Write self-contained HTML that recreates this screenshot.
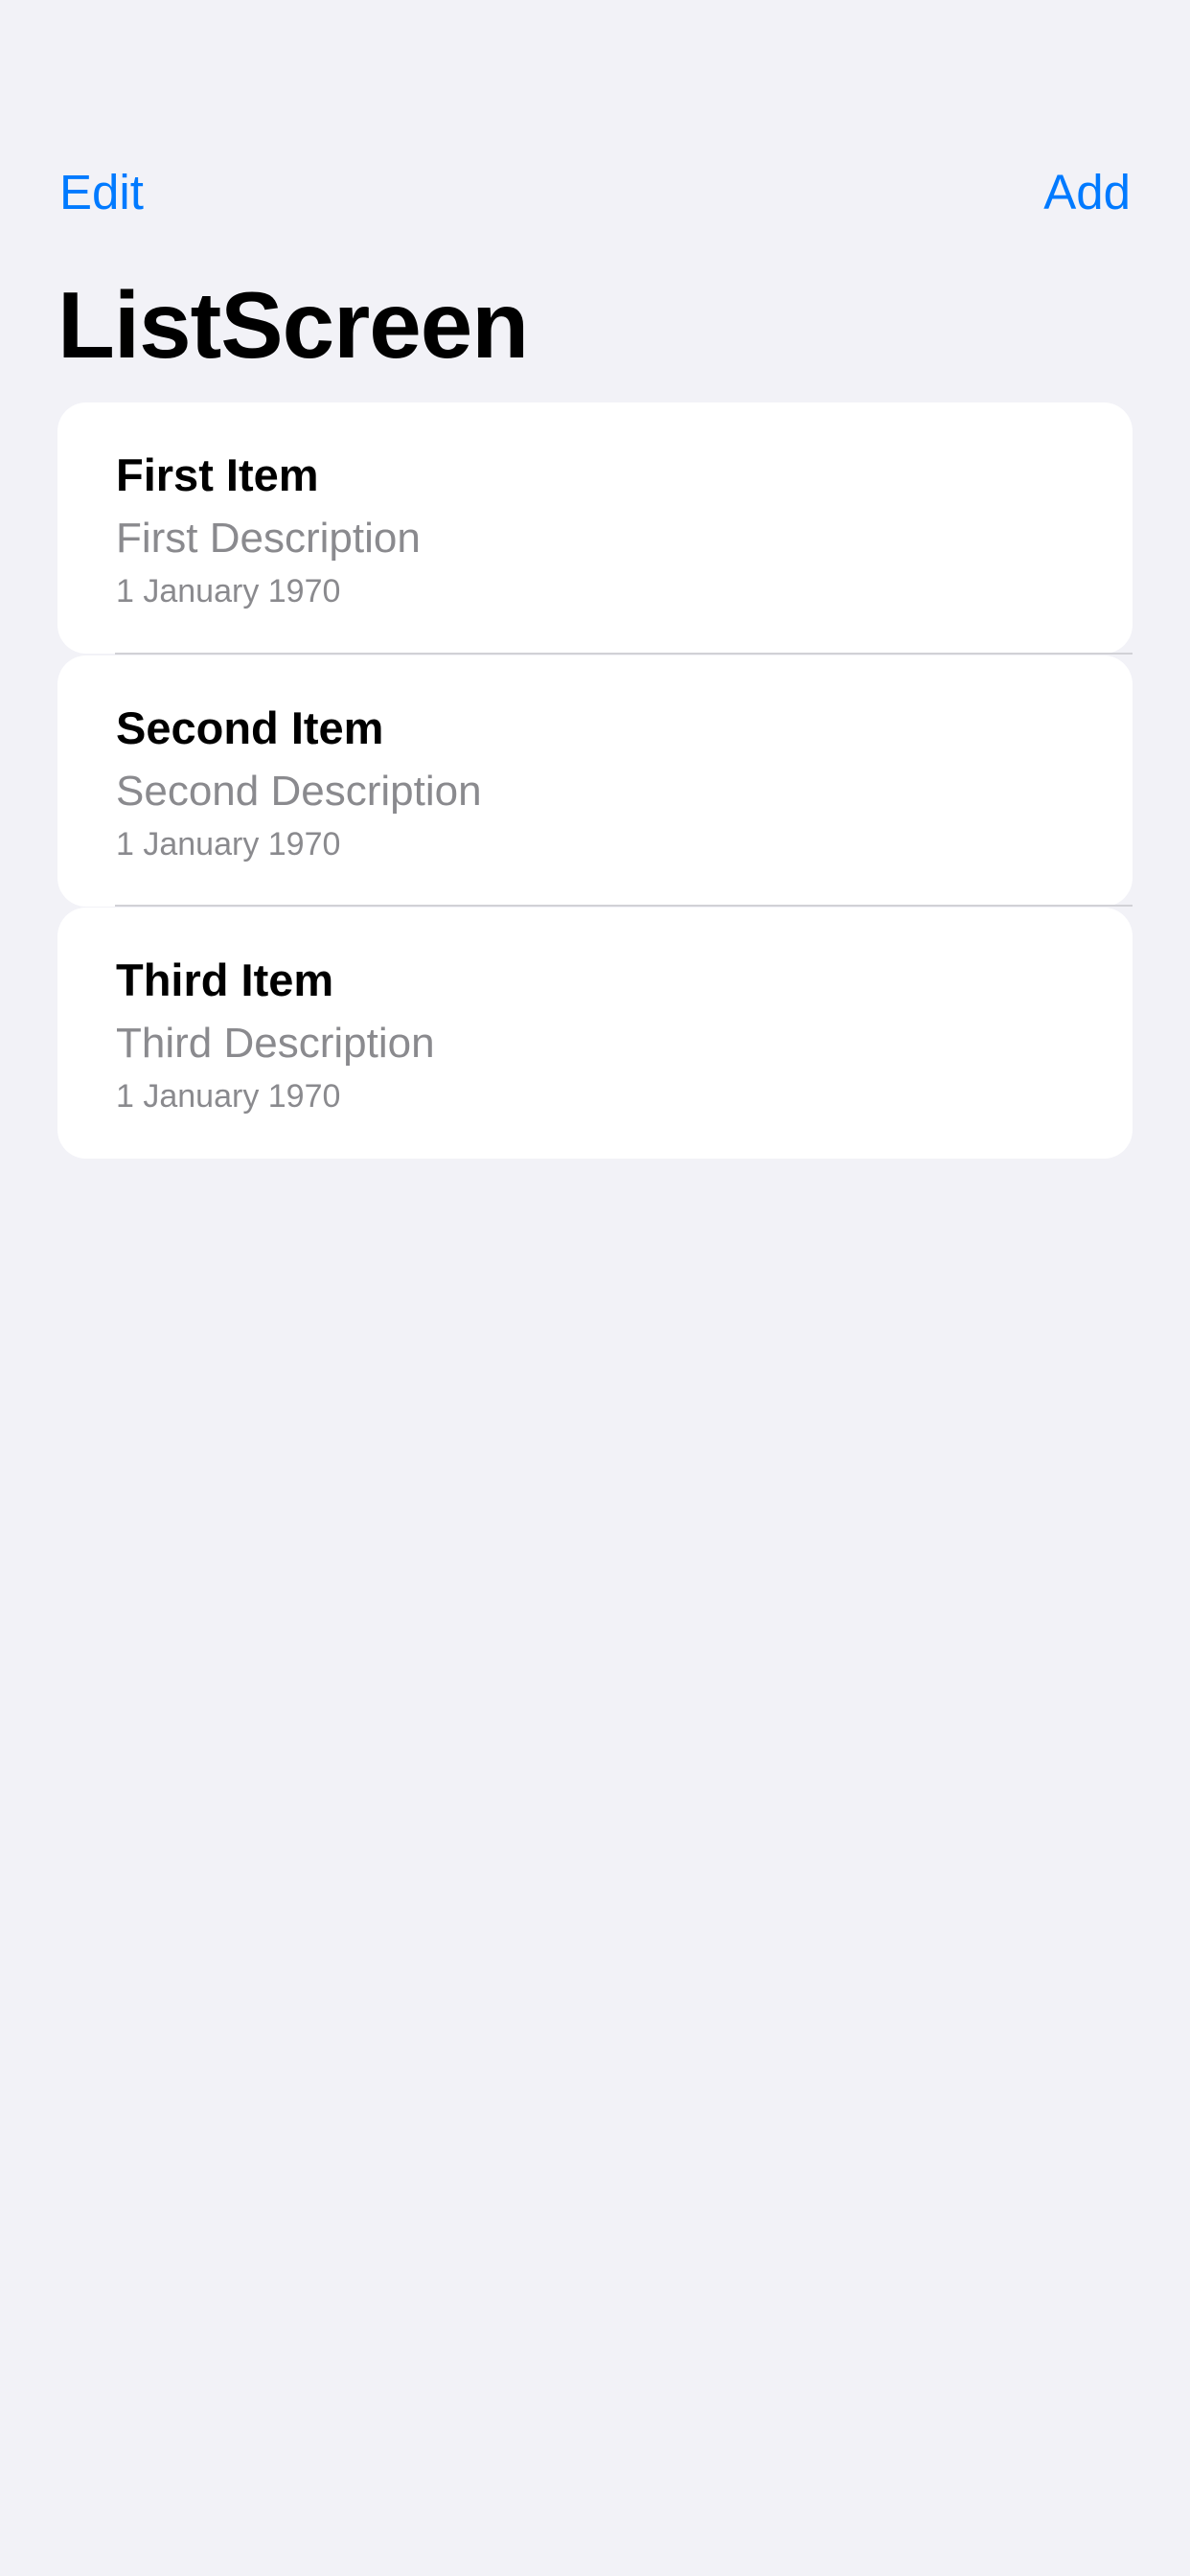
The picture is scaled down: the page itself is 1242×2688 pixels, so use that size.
<!DOCTYPE html>
<html><head><meta charset="utf-8"><style>
html,body{margin:0;padding:0}
body{width:1242px;height:2688px;background:#f2f2f7;position:relative;overflow:hidden;font-family:"Liberation Sans",sans-serif}
.a{position:absolute;white-space:nowrap}
.nav{font-size:51px;line-height:51px;color:#007aff;top:175px}
.title{font-size:98px;line-height:98px;font-weight:bold;left:60px;top:290px;color:#000;letter-spacing:-1px}
.card{position:absolute;left:60px;width:1122px;height:262px;background:#fff;border-radius:30px}
.t{left:61px;top:52px;font-size:47px;line-height:47px;font-weight:bold;color:#000}
.d{left:61px;top:120px;font-size:44px;line-height:44px;color:#8a8a8e}
.dt{left:61px;top:180px;font-size:34px;line-height:34px;color:#8a8a8e}
.sep{position:absolute;left:120px;width:1062px;height:2px;background:#d1d1d6}
</style></head><body>
<div class="a nav" style="left:62px">Edit</div>
<div class="a nav" style="right:62px">Add</div>
<div class="a title">ListScreen</div>

<div class="card" style="top:420px">
<div class="a t">First Item</div>
<div class="a d">First Description</div>
<div class="a dt">1 January 1970</div>
</div>
<div class="sep" style="top:681px"></div>

<div class="card" style="top:684px">
<div class="a t">Second Item</div>
<div class="a d">Second Description</div>
<div class="a dt">1 January 1970</div>
</div>
<div class="sep" style="top:944px"></div>

<div class="card" style="top:947px">
<div class="a t">Third Item</div>
<div class="a d">Third Description</div>
<div class="a dt">1 January 1970</div>
</div>
</body></html>
